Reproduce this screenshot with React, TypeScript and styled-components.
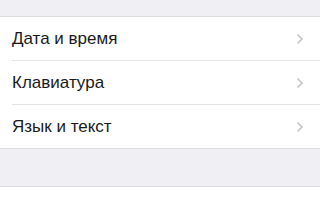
import React from 'react'
import styled, { createGlobalStyle } from 'styled-components'

const GlobalStyle = createGlobalStyle`
  html, body {
    margin: 0;
    padding: 0;
    background: #efeff4;
    font-family: 'Liberation Sans', Arial, sans-serif;
  }
`

const Page = styled.div`
  display: flex;
  flex-direction: column;
  width: 320px;
  height: 200px;
  overflow: hidden;
  background: #efeff4;
`

const Gap = styled.div<{ $h: number }>`
  height: ${p => p.$h}px;
  flex-shrink: 0;
`

const Group = styled.section`
  display: flex;
  flex-direction: column;
  background: #fff;
  border-top: 1px solid #dcdce0;
  border-bottom: 1px solid #dcdce0;
`

const Row = styled.div<{ $last?: boolean }>`
  display: flex;
  align-items: center;
  height: 43px;
  padding-left: 12px;
  position: relative;
  &::after {
    content: '';
    display: ${p => (p.$last ? 'none' : 'block')};
    position: absolute;
    left: 12px;
    right: 0;
    bottom: -1px;
    height: 1px;
    background: #e2e2e6;
  }
  & + & {
    margin-top: 1px;
  }
`

const Label = styled.span`
  flex: 1;
  font-size: 17px;
  color: #1a1a1a;
`

const Chevron = styled.svg`
  width: 8px;
  height: 12px;
  margin-right: 16px;
`

const Bottom = styled.div`
  flex: 1;
  background: #fff;
  border-top: 1px solid #dcdce0;
`

const items = ['Дата и время', 'Клавиатура', 'Язык и текст']

const App = () => {
  return (
    <>
      <GlobalStyle />
      <Page>
        <Gap $h={16} />
        <Group>
          {items.map((item, i) => (
            <Row key={item} $last={i === items.length - 1}>
              <Label>{item}</Label>
              <Chevron viewBox="0 0 8 12">
                <path d="M1.5 1.5 L6 6 L1.5 10.5" fill="none" stroke="#c4c4c9" strokeWidth="1.6" />
              </Chevron>
            </Row>
          ))}
        </Group>
        <Gap $h={37} />
        <Bottom />
      </Page>
    </>
  )
}

export default App
